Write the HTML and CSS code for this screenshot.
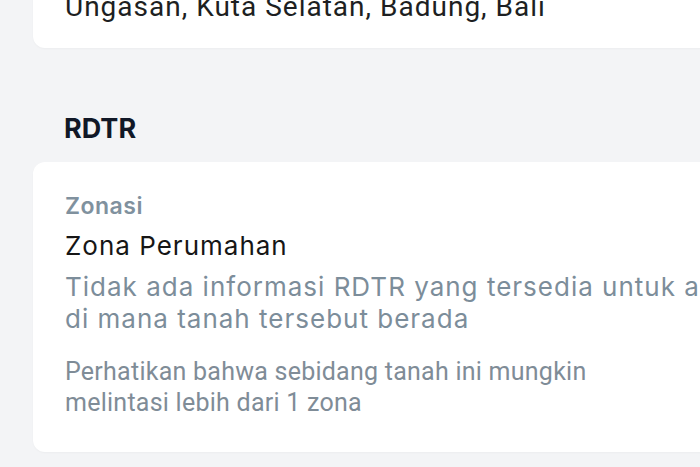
FILE: index.html
```html
<!DOCTYPE html>
<html lang="id">
<head>
<meta charset="utf-8">
<title>RDTR</title>
<link rel="stylesheet" href="styles.css">
</head>
<body>
<main class="page">
  <section class="card card-address">
    <p class="address">Ungasan, Kuta Selatan, Badung, Bali</p>
  </section>
  <h2 class="section-title">RDTR</h2>
  <section class="card card-rdtr">
    <p class="label">Zonasi</p>
    <p class="value">Zona Perumahan</p>
    <p class="info">Tidak ada informasi RDTR yang tersedia untuk area di mana tanah tersebut berada</p>
    <p class="note">Perhatikan bahwa sebidang tanah ini mungkin melintasi lebih dari 1 zona</p>
  </section>
</main>
</body>
</html>
```
FILE: styles.css
```css
html, body {
  margin: 0;
  padding: 0;
  background: #f3f4f6;
  overflow: hidden;
}
body {
  width: 700px;
  height: 467px;
}
p, h2 {
  margin: 0;
}
.page {
  display: flex;
  flex-direction: column;
  margin-top: -34px;
  padding-left: 33px;
  width: 820px;
}
.card {
  background: #ffffff;
  border-radius: 12px;
  box-shadow: 0 1px 2px rgba(17, 24, 39, 0.03);
}
.card-address {
  padding: 24px 32px 25px;
}
.address {
  font-family: Roboto, "Liberation Sans", sans-serif;
  font-size: 28px;
  line-height: 33px;
  letter-spacing: 1px;
  color: #1d1f22;
}
.section-title {
  margin: 65px 0 17px 31px;
  font-family: Inter, "Liberation Sans", sans-serif;
  font-weight: 700;
  font-size: 27px;
  line-height: 32px;
  color: #111827;
}
.card-rdtr {
  padding: 30px 32px 34px;
}
.label {
  font-family: Inter, "Liberation Sans", sans-serif;
  font-weight: 600;
  font-size: 23px;
  line-height: 28px;
  letter-spacing: 0.5px;
  color: #80919e;
}
.value {
  margin-top: 10px;
  font-family: Inter, "Liberation Sans", sans-serif;
  font-size: 26px;
  line-height: 32px;
  letter-spacing: 1px;
  color: #161616;
}
.info {
  margin-top: 9px;
  width: 700px;
  font-family: Inter, "Liberation Sans", sans-serif;
  font-size: 26px;
  line-height: 32px;
  letter-spacing: 1px;
  color: #7c8d9a;
}
.note {
  margin-top: 21px;
  width: 600px;
  font-family: Roboto, "Liberation Sans", sans-serif;
  font-size: 25px;
  line-height: 31px;
  letter-spacing: 0.25px;
  color: #7f8c97;
}
```
